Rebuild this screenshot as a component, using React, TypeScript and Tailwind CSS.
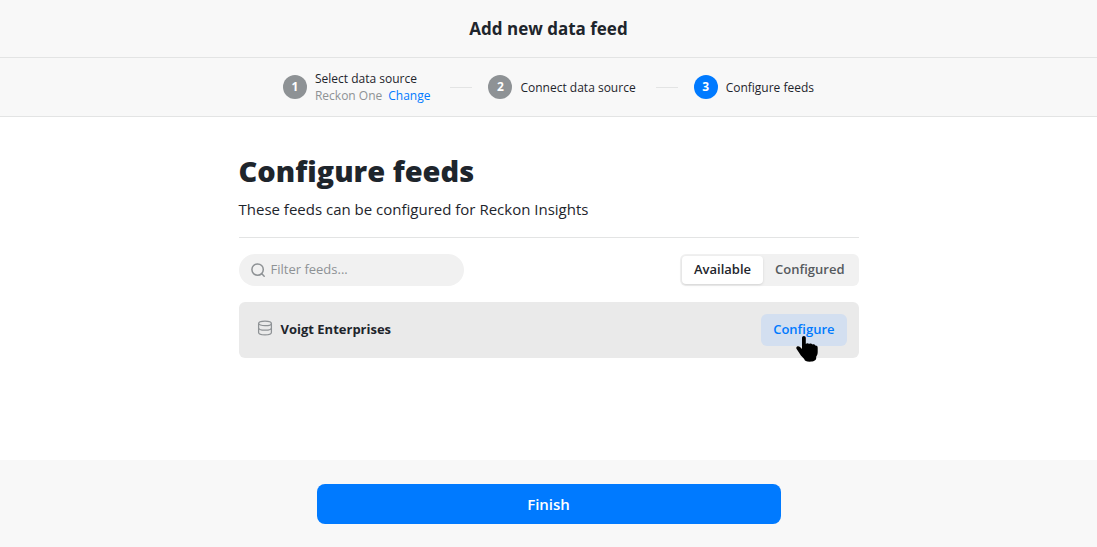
import { Fragment, useState } from "react";

type Step = { label: string; detail?: string; current?: boolean };

const steps: Step[] = [
  { label: "Select data source", detail: "Reckon One" },
  { label: "Connect data source" },
  { label: "Configure feeds", current: true },
];

const feeds = ["Voigt Enterprises"];

function SearchIcon() {
  return (
    <svg className="size-4 shrink-0" viewBox="0 0 16 16" fill="none" stroke="#8e9295" strokeWidth="1.5" strokeLinecap="round" aria-hidden="true">
      <circle cx="6.6" cy="7.600" r="5.700" />
      <path d="M10.800 11.800l2.400 2.400" />
    </svg>
  );
}

function DatabaseIcon() {
  return (
    <svg className="mb-1 size-4 shrink-0" viewBox="0 0 16 16" fill="none" stroke="#8e9295" strokeWidth="1.25" aria-hidden="true">
      <ellipse cx="8" cy="3.4" rx="6.4" ry="2.3" />
      <path d="M1.6 3.4v9c0 1.500 1.600 2.400 6.400 2.400s6.400-.9 6.400-2.400v-9" />
      <path d="M1.600 8c0 1.500 2.400 2.200 6.400 2.200s6.400-.7 6.400-2.200" />
    </svg>
  );
}

function PointerHand() {
  return (
    <svg className="pointer-events-none absolute top-5 left-[35px] h-7 w-[22px]" viewBox="0 0 22 28" fill="#000" aria-hidden="true">
      <path d="M6 4c0-1.200.8-2 1.900-2s1.900.8 1.900 2v6c.6-1 2.600-1.200 3.300-.1.800-.8 2.600-.6 3.200.6 1.200-.5 2.700 0 2.900 1.100 1.500-.2 2.500.6 2.500 2.100v4.300c0 1.800-.4 3.200-1.500 4.700v1.600c0 2.200-2.900 3.400-6.400 3.400s-5.200-.8-5.600-2.600l-3.300-3.600-4.100-6.200c-.8-1.100-.6-2.200.3-2.800 1-.6 2.100-.2 2.900.6l2 1.900z" />
    </svg>
  );
}

function Stepper() {
  return (
    <nav aria-label="Progress" className="flex h-[59px] items-center justify-center border-b border-[#e3e4e4]">
      {steps.map((step, i) => (
        <Fragment key={step.label}>
          {i > 0 && <div className="mr-4 ml-5 h-px w-[22px] bg-[#e3e4e4]" />}
          <div className="flex items-center gap-2">
            <span
              className={`flex size-6 items-center justify-center rounded-full text-xs font-bold text-white ${step.current ? "bg-[#007aff]" : "bg-[#8e9295]"}`}
            >
              {i + 1}
            </span>
            <div className="text-xs leading-[17px]">
              <div className="font-medium">{step.label}</div>
              {step.detail && (
                <div className="flex gap-1.5 text-[#8e9295]">
                  {step.detail}
                  <a href="#source" className="text-[#007aff]">Change</a>
                </div>
              )}
            </div>
          </div>
        </Fragment>
      ))}
    </nav>
  );
}

export default function App() {
  const [tab, setTab] = useState("Available");
  const [filter, setFilter] = useState("");

  return (
    <div className="flex min-h-screen flex-col bg-white font-['Open_Sans','Noto_Sans',sans-serif] text-[#1e252c]">
      <header className="bg-[#f8f8f8]">
        <div className="flex h-[58px] items-center justify-center border-b border-[#e3e4e4]">
          <h2 className="text-[17px] leading-6 font-bold">Add new data feed</h2>
        </div>
        <Stepper />
      </header>

      <main className="mx-auto w-full max-w-[620px] flex-1 pt-9">
        <h1 className="text-[29px] leading-9 font-extrabold">Configure feeds</h1>
        <p className="mt-2 border-b border-[#e3e4e4] pb-4 text-[15px] leading-6">
          These feeds can be configured for Reckon Insights
        </p>

        <div className="mt-4 flex items-center justify-between">
          <label className="flex h-8 w-[225px] items-center gap-1 rounded-full bg-[#f1f1f1] px-3">
            <SearchIcon />
            <input
              type="text"
              aria-label="Filter feeds"
              placeholder="Filter feeds..."
              value={filter}
              onChange={(e) => setFilter(e.target.value)}
              className="min-w-0 flex-1 bg-transparent text-[13px] outline-none placeholder:text-[#8e9295]"
            />
          </label>
          <div className="flex h-8 items-center rounded-md bg-[#f1f1f1] p-0.5">
            {["Available", "Configured"].map((name) => (
              <button
                key={name}
                type="button"
                aria-pressed={tab === name}
                onClick={() => setTab(name)}
                className={`h-7 rounded px-3 text-[13px] font-semibold ${tab === name ? "bg-white shadow-sm" : "text-[#555a5e]"}`}
              >
                {name}
              </button>
            ))}
          </div>
        </div>

        <ul className="mt-4">
          {feeds
            .filter((name) => name.toLowerCase().includes(filter.toLowerCase()))
            .map((name) => (
              <li key={name} className="flex h-14 items-center rounded-md bg-[#eaeaea] pr-3 pl-[18px]">
                <DatabaseIcon />
                <span className="ml-2 text-[13px] font-bold">{name}</span>
                <button
                  type="button"
                  className="relative ml-auto h-8 rounded-md bg-[#d3dff0] px-3 text-[13px] font-semibold text-[#007aff]"
                >
                  Configure
                  <PointerHand />
                </button>
              </li>
            ))}
        </ul>
      </main>

      <footer className="flex justify-center bg-[#f8f8f8] px-6 pt-6 pb-[23px]">
        <button type="button" className="h-10 w-full max-w-[464px] rounded-lg bg-[#007aff] text-[15px] font-semibold text-white">
          Finish
        </button>
      </footer>
    </div>
  );
}
